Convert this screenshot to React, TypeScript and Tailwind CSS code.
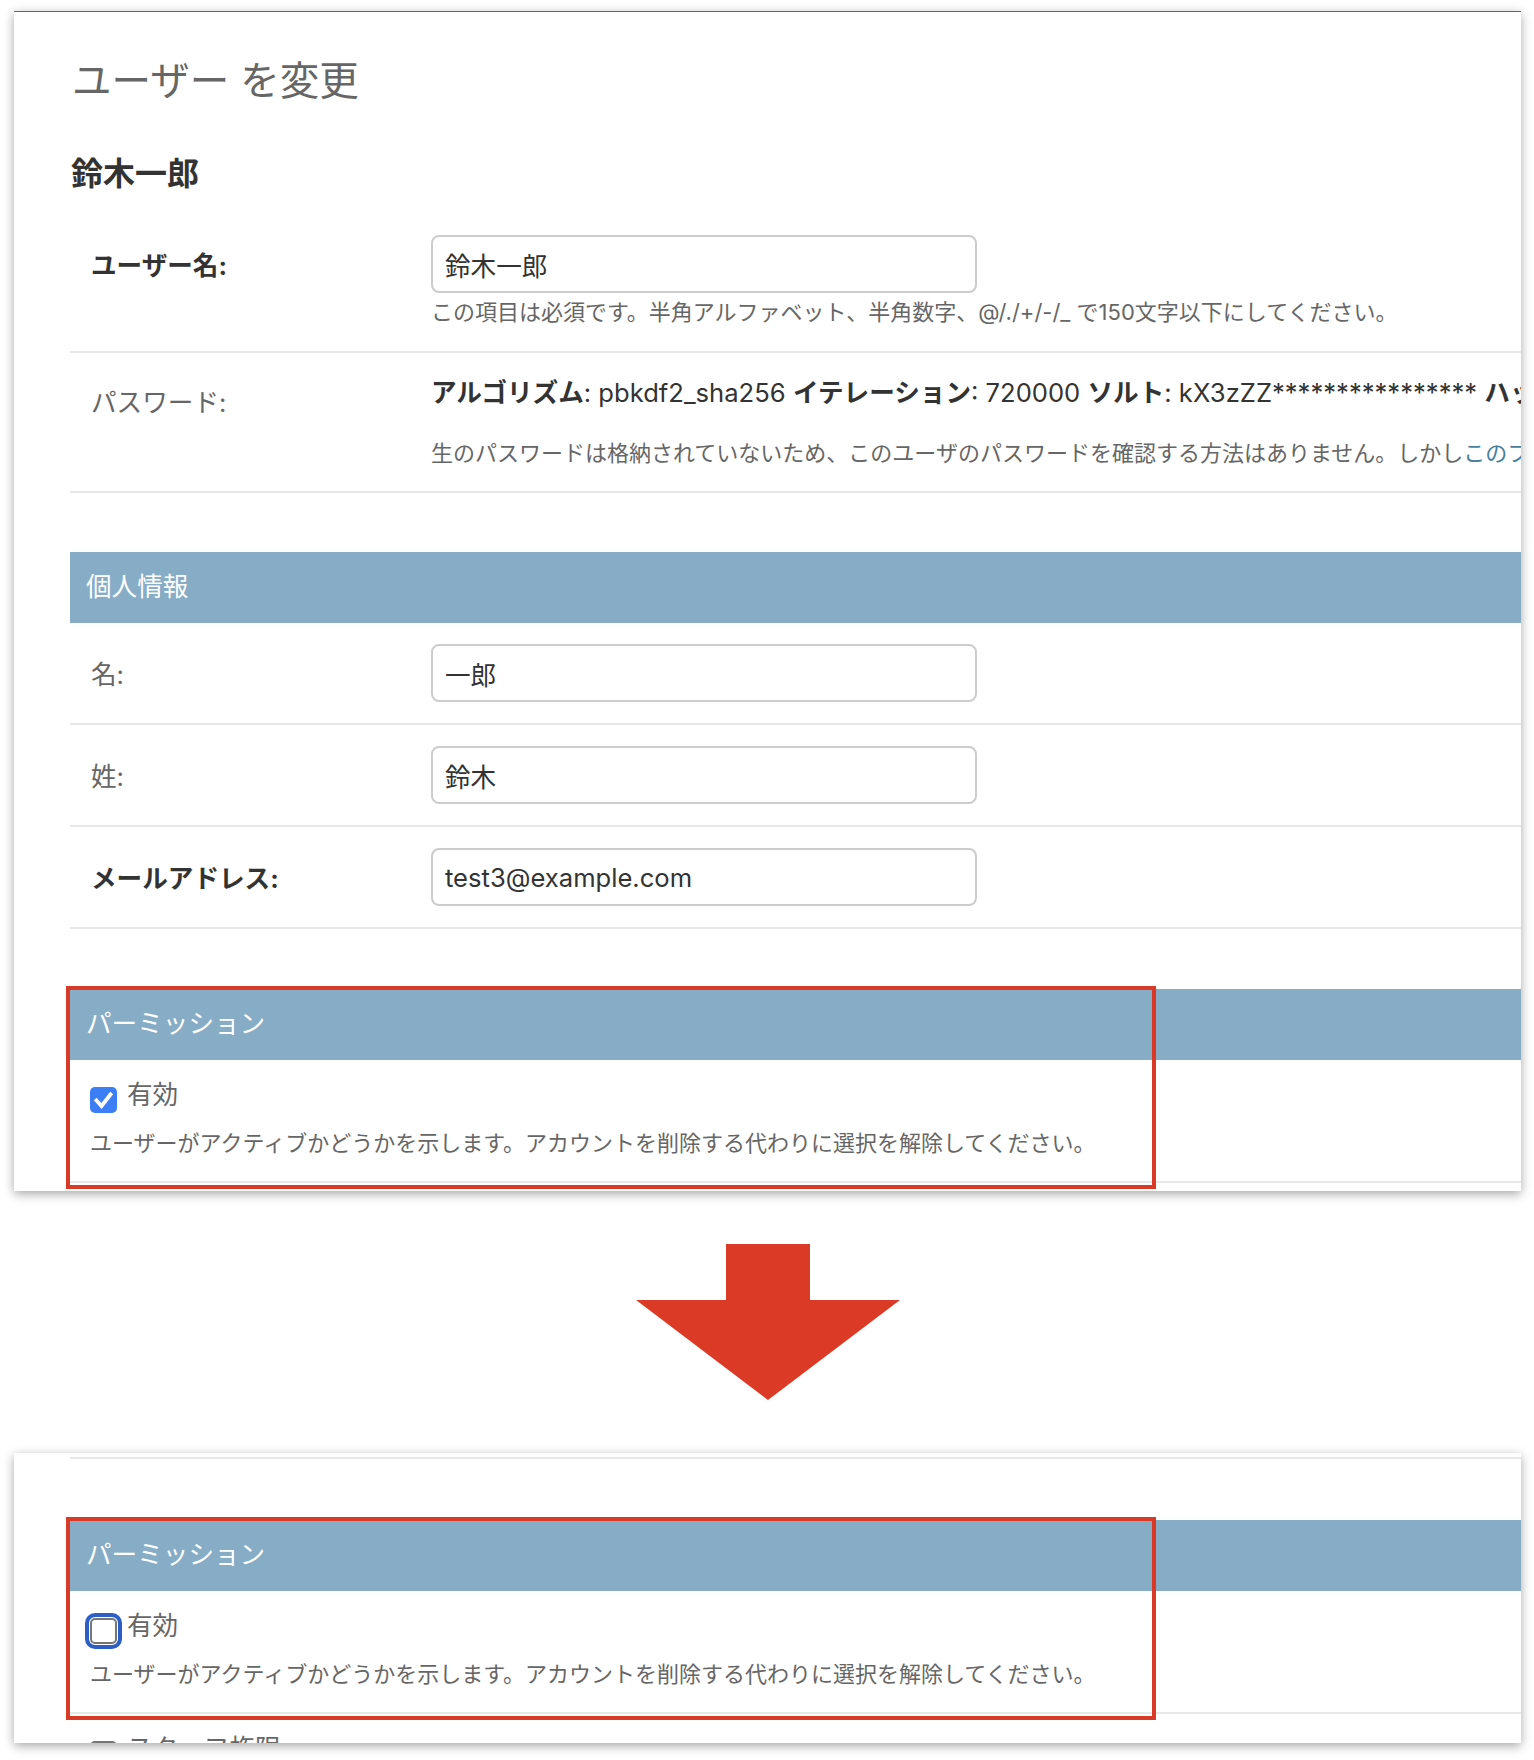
import type { ReactNode } from 'react';

const RED = 'border-[#d93a27]';

function Separator() {
  return <div className="h-[2px] bg-[#e8e8e8]" />;
}

function Label({ text, required, className = '' }: { text: string; required?: boolean; className?: string }) {
  return (
    <div className={`h-[58px] w-[361px] shrink-0 pl-[21px] text-[25.6px] leading-[62px] ${className}`}>
      <span className={required ? 'font-bold text-[#333]' : 'text-[#666]'}>{text}:</span>
    </div>
  );
}

function TextBox({ value }: { value: string }) {
  return (
    <input
      readOnly
      value={value}
      className="h-[58px] w-[546px] rounded-[8px] border-2 border-[#cccccc] bg-white px-[12px] text-[25.6px] text-[#333] outline-none"
    />
  );
}

function InputRow({ label, required, value, help }: { label: string; required?: boolean; value: string; help?: ReactNode }) {
  return (
    <>
      <div className={`flex pt-[21px] ${help ? 'pb-[23px]' : 'pb-[21px]'}`}>
        <Label text={label} required={required} />
        <div className="min-w-0 flex-1">
          <TextBox value={value} />
          {help && <p className="mt-[3px] whitespace-nowrap text-[22px] leading-[32px] text-[#666]">{help}</p>}
        </div>
      </div>
      <Separator />
    </>
  );
}

function Header({ title }: { title: string }) {
  return (
    <div className="flex h-[71px] items-center bg-[#86acc6] pl-[16px] text-[25.6px] text-white">{title}</div>
  );
}

function Checkbox({ checked, focused }: { checked?: boolean; focused?: boolean }) {
  if (checked) {
    return (
      <span className="mt-[6px] flex h-[26px] w-[27px] shrink-0 items-center justify-center rounded-[5px] bg-[#3b7ef5]">
        <svg width="27" height="26" viewBox="0 0 27 26">
          <polyline points="6.5,13.5 11.5,19 20.5,7.5" fill="none" stroke="white" strokeWidth="3.8" strokeLinecap="square" />
        </svg>
      </span>
    );
  }
  return (
    <span
      className={`mt-[6px] block h-[26px] w-[27px] shrink-0 rounded-[5px] border-2 border-[#767676] bg-white ${
        focused ? 'outline-4 outline-offset-[1px] outline-[#2c5fc6]' : ''
      }`}
    />
  );
}

function Permissions({ checked, focused }: { checked?: boolean; focused?: boolean }) {
  return (
    <div className="relative">
      <Header title="パーミッション" />
      <div className="pl-[20px] pt-[21px] pb-[22px]">
        <div className="flex items-start gap-[10px]">
          <Checkbox checked={checked} focused={focused} />
          <span className="text-[25.6px] leading-[28px] text-[#666]">有効</span>
        </div>
        <p className="mt-[14px] whitespace-nowrap text-[22px] leading-[32px] text-[#666]">
          ユーザーがアクティブかどうかを示します。アカウントを削除する代わりに選択を解除してください。
        </p>
      </div>
      <Separator />
      <div className="pl-[20px] pt-[21px]">
        <div className="flex items-start gap-[10px]">
          <Checkbox />
          <span className="text-[25.6px] leading-[28px] text-[#666]">スタッフ権限</span>
        </div>
      </div>
      <div className={`absolute -top-[3px] -left-[4px] h-[203px] w-[1090px] border-4 ${RED}`} />
    </div>
  );
}

export default function App() {
  return (
    <div className="flex h-[1760px] w-[1534px] flex-col bg-white pt-[11px] pl-[14px] font-[family-name:Inter,'Noto_Sans_CJK_JP',sans-serif]">
      {/* before */}
      <div className="h-[1180px] w-[1507px] shrink-0 overflow-hidden border-t border-[#3a68c2] bg-white shadow-[0_3px_10px_rgba(0,0,0,0.35)]">
        <div className="pl-[56px] pt-[47px]">
          <h1 className="pl-[2px] text-[39.5px] leading-[44px] text-[#666]">ユーザー を変更</h1>
          <h2 className="mt-[51px] pl-[1px] text-[32px] font-bold leading-[40px] text-[#333]">鈴木一郎</h2>

          <div className="mt-[20px]">
            <InputRow
              label="ユーザー名"
              required
              value="鈴木一郎"
              help="この項目は必須です。半角アルファベット、半角数字、@/./+/-/_ で150文字以下にしてください。"
            />

            <div className="flex pb-[22px]">
              <Label text="パスワード" className="pt-[19px]" />
              <div className="min-w-0 flex-1 whitespace-nowrap pt-[24px]">
                <p className="text-[25.6px] leading-[32px] text-[#333]">
                  <strong className="font-bold">アルゴリズム</strong>: pbkdf2_sha256{' '}
                  <strong className="font-bold">イテレーション</strong>: 720000{' '}
                  <strong className="font-bold">ソルト</strong>: kX3zZZ****************{' '}
                  <strong className="font-bold">ハッシュ</strong>: 0SPaXh**************************************
                </p>
                <p className="mt-[28px] text-[22px] leading-[32px] text-[#666]">
                  生のパスワードは格納されていないため、このユーザのパスワードを確認する方法はありません。しかし
                  <a className="text-[#447e9b]">このフォーム</a>
                  を使用してパスワードを変更できます。
                </p>
              </div>
            </div>
            <Separator />
          </div>

          <div className="mt-[59px]">
            <Header title="個人情報" />
            <InputRow label="名" value="一郎" />
            <InputRow label="姓" value="鈴木" />
            <InputRow label="メールアドレス" required value="test3@example.com" />
          </div>

          <div className="mt-[60px]">
            <Permissions checked />
          </div>
        </div>
      </div>

      {/* arrow */}
      <svg width="264" height="156" viewBox="0 0 264 156" className="mt-[53px] ml-[622px] shrink-0">
        <polygon points="90,0 174,0 174,56 264,56 132,156 0,56 90,56" fill="#db3b26" />
      </svg>

      {/* after */}
      <div className="mt-[53px] h-[290px] w-[1507px] shrink-0 overflow-hidden bg-white shadow-[0_3px_10px_rgba(0,0,0,0.35)]">
        <div className="pl-[56px] pt-[4px]">
          <Separator />
          <div className="mt-[61px]">
            <Permissions focused />
          </div>
        </div>
      </div>
    </div>
  );
}
